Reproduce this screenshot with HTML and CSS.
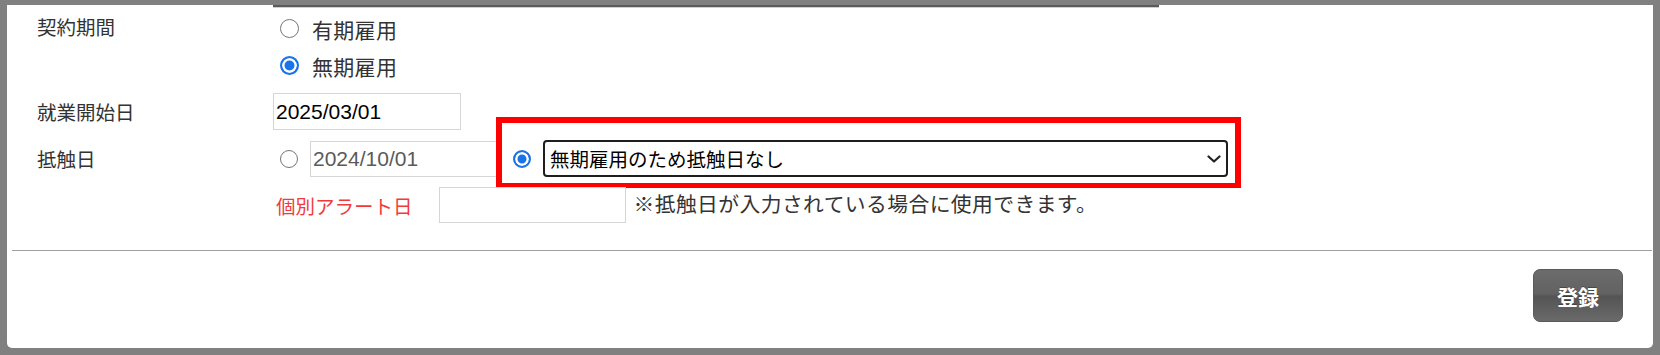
FILE: index.html
```html
<!DOCTYPE html>
<html lang="ja">
<head>
    <meta charset="UTF-8">
    <meta name="viewport" content="width=device-width, initial-scale=1.0">
    <title>契約情報</title>
    <link rel="stylesheet" href="styles.css">
</head>
<body>
    <div class="panel">
        <div class="prev-field"></div>

        <div class="form">
            <div class="row row-contract">
                <div class="label">契約期間</div>
                <div class="value options">
                    <label class="option"><input type="radio" class="radio" name="term">有期雇用</label>
                    <label class="option"><input type="radio" class="radio" name="term" checked>無期雇用</label>
                </div>
            </div>

            <div class="row row-start">
                <div class="label">就業開始日</div>
                <div class="value">
                    <input type="text" class="text" value="2025/03/01">
                </div>
            </div>

            <div class="row row-conflict">
                <div class="label">抵触日</div>
                <div class="value">
                    <input type="radio" class="radio" name="conflict">
                    <input type="text" class="text muted" value="2024/10/01">
                    <input type="radio" class="radio radio-select" name="conflict" checked>
                    <div class="select-wrap">
                        <select class="select">
                            <option>無期雇用のため抵触日なし</option>
                        </select>
                        <svg class="chevron" width="14" height="8" viewBox="0 0 14 8">
                            <path d="M1.5 1.5 L7 6.5 L12.5 1.5" fill="none" stroke="#222" stroke-width="2.2" stroke-linecap="round" stroke-linejoin="round"/>
                        </svg>
                    </div>
                    <div class="highlight"></div> <!-- annotation box -->
                </div>
            </div>

            <div class="row row-alert">
                <div class="label"></div>
                <div class="value">
                    <span class="alert-label">個別アラート日</span>
                    <input type="text" class="text alert-input">
                    <span class="note">※抵触日が入力されている場合に使用できます。</span>
                </div>
            </div>
        </div>

        <div class="divider"></div>

        <div class="actions">
            <button class="submit">登録</button>
        </div>
    </div>
</body>
</html>
```

FILE: styles.css
```css
html, body {
    height: 355px;
    overflow: hidden;
}
body {
    margin: 0;
    padding: 5px 7px 0;
    background-color: #808080;
    font-family: "Liberation Sans", "Noto Sans CJK JP", sans-serif;
    color: #333;
}
.panel {
    height: 343px;
    background-color: #fff;
    border-radius: 0 0 5px 5px;
    box-sizing: border-box;
}
.prev-field {
    margin-left: 266px;
    width: 886px;
    height: 0;
    border-bottom: 2px solid #5a5a5a;
    box-shadow: 0 1px 0 #d0d0d0;
}

.form {
    padding-left: 30px;
}
.row {
    display: flex;
    align-items: center;
}
.label {
    width: 236px;
    flex-shrink: 0;
    font-size: 19.5px;
    color: #333;
}
.value {
    display: flex;
    align-items: center;
    position: relative;
}

.row-contract {
    margin-top: 3px;
    align-items: flex-start;
}
.row-contract .label {
    line-height: 37px;
}
.options {
    flex-direction: column;
    align-items: flex-start;
}
.option {
    display: flex;
    align-items: center;
    height: 37px;
    font-size: 21px;
    letter-spacing: 0.3px;
    color: #333;
}
.option .radio {
    width: 19px;
    height: 19px;
    margin: 0 13px 0 7px;
}

.radio {
    appearance: none;
    -webkit-appearance: none;
    width: 18px;
    height: 18px;
    margin: 0;
    border: 1.5px solid #767676;
    border-radius: 50%;
    background-color: #fff;
    box-sizing: border-box;
    flex-shrink: 0;
}
.radio:checked {
    border: 2px solid #1a73e8;
    background-color: #1a73e8;
    box-shadow: inset 0 0 0 2.5px #fff;
}

.text {
    height: 36px;
    width: 188px;
    box-sizing: border-box;
    padding: 0 2px;
    border: 1.5px solid #d6d6d6;
    font-family: "Liberation Sans", sans-serif;
    font-size: 21px;
    color: #000;
    outline: none;
}
.text.muted {
    color: #5a5a5a;
}

.row-start {
    margin-top: 9px;
}
.row-start .text {
    height: 37px;
}

.row-conflict {
    margin-top: 10px;
    height: 37px;
}
.row-conflict .radio {
    margin-left: 7px;
}
.row-conflict .text {
    margin-left: 12px;
}
.row-conflict .radio-select {
    margin-left: 15px;
}
.select-wrap {
    position: relative;
    margin-left: 12px;
}
.select {
    appearance: none;
    -webkit-appearance: none;
    width: 685px;
    height: 37px;
    padding: 0 30px 0 5px;
    border: 2px solid #1e1e1e;
    border-radius: 4px;
    background-color: #fff;
    font-family: "Noto Sans CJK JP", sans-serif;
    font-size: 19.5px;
    color: #000;
}
.chevron {
    position: absolute;
    right: 7px;
    top: 15px;
    pointer-events: none;
}
.highlight {
    position: absolute;
    left: 223px;
    top: -23px;
    width: 745px;
    height: 71px;
    box-sizing: border-box;
    border: 6px solid #ff0000;
    border-bottom-width: 5px;
    pointer-events: none;
}

.row-alert {
    margin-top: 10px;
}
.alert-label {
    margin-left: 3px;
    font-size: 19.5px;
    color: #f23a3a;
}
.alert-input {
    width: 187px;
    margin-left: 26px;
}
.note {
    margin-left: 8px;
    margin-top: -4px;
    font-size: 20.8px;
    letter-spacing: 0.4px;
    color: #333;
}

.divider {
    margin: 27px 1px 0 5px;
    border-top: 1.5px solid #a0a0a0;
}

.actions {
    display: flex;
    justify-content: flex-end;
    padding: 18px 30px 0 0;
}
.submit {
    width: 90px;
    height: 53px;
    border: 1px solid #5a5a5a;
    border-radius: 7px;
    background: linear-gradient(to bottom, #6c6c6c 0%, #626262 46%, #545454 52%, #6a6a6a 100%);
    color: #fff;
    font-family: "Noto Sans CJK JP", sans-serif;
    font-size: 21px;
    font-weight: bold;
    text-shadow: 0 -1px 0 rgba(0, 0, 0, 0.3);
    cursor: pointer;
}
```
